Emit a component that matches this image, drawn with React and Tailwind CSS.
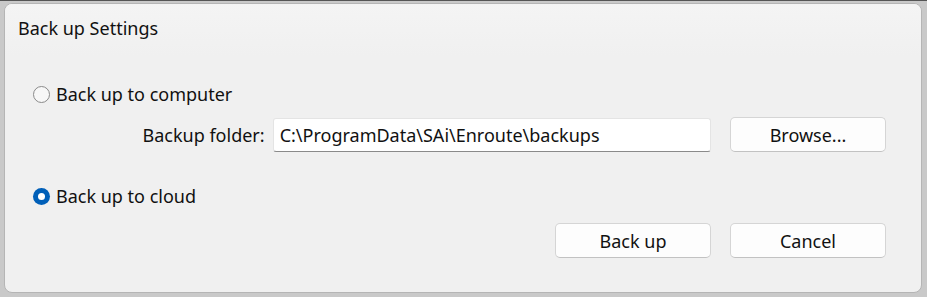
import React, { useState } from 'react';

function Radio({ checked, label, onClick }) {
  return (
    <button type="button" onClick={onClick} className="h-[22px] flex items-center gap-[6px] text-[18px] leading-[22px] text-[#111]">
      {checked ? (
        <span className="w-[17px] h-[17px] rounded-full bg-[#005fb8] flex items-center justify-center">
          <span className="w-[7px] h-[7px] rounded-full bg-white" />
        </span>
      ) : (
        <span className="w-[17px] h-[17px] rounded-full border-[1.5px] border-[#8a8a8a] bg-[#f7f7f7]" />
      )}
      <span>{label}</span>
    </button>
  );
}

function Button({ children }) {
  return (
    <button type="button" className="w-[156px] h-[35px] rounded-[5px] border border-[#d5d5d5] border-b-[#c2c2c2] bg-[#fdfdfd] text-[18px] leading-[22px] text-[#111]">
      {children}
    </button>
  );
}

export default function App() {
  const [target, setTarget] = useState('cloud');

  return (
    <div className="w-[927px] h-[297px] bg-[#c9c9c9] border-t border-[#555] pt-[2px] pl-[4px] pr-[5px] pb-[4px] font-['Noto_Sans','Open_Sans',sans-serif]">
      <div className="h-full rounded-[8px] border border-[#b5b5b5] bg-[#f0f0f0] flex flex-col overflow-hidden">
        <div className="h-[52px] bg-gradient-to-b from-[#f4f4f4] to-[#f0f0f0] pl-[13px] pt-[13px] text-[18px] leading-[22px] text-[#111]">
          Back up Settings
        </div>

        <div className="flex-1 flex flex-col pl-[28px] pr-[35px] pt-[27px]">
          <Radio checked={target === 'computer'} label="Back up to computer" onClick={() => setTarget('computer')} />

          <div className="flex items-center h-[35px] mt-[12px]">
            <span className="w-[240px] text-right text-[18px] leading-[22px] text-[#111] pr-[8px]">Backup folder:</span>
            <div className="w-[439px] h-[34px] bg-white border border-[#e4e4e4] border-b-[#8a8a8a] rounded-[3px] flex items-center px-[6px] text-[18px] leading-[22px] text-[#111]">
              C:\ProgramData\SAi\Enroute\backups
            </div>
            <div className="ml-[19px]">
              <Button>Browse...</Button>
            </div>
          </div>

          <div className="mt-[33px]">
            <Radio checked={target === 'cloud'} label="Back up to cloud" onClick={() => setTarget('cloud')} />
          </div>

          <div className="flex justify-end gap-[19px] mt-[16px]">
            <Button>Back up</Button>
            <Button>Cancel</Button>
          </div>
        </div>
      </div>
    </div>
  );
}
